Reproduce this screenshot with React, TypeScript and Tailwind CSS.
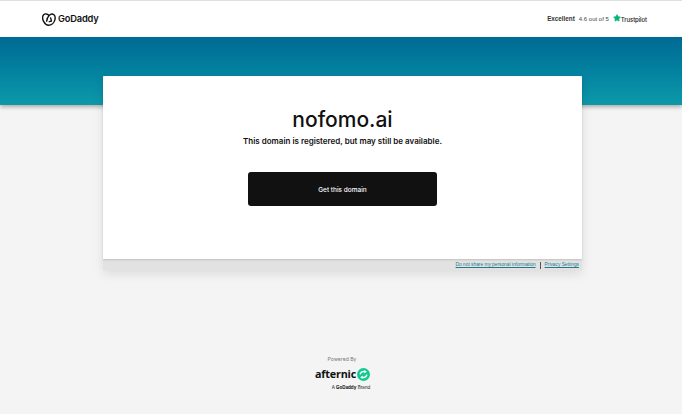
import { Star } from 'lucide-react';

function GoDaddyMark({ className }: { className: string }) {
  return (
    <svg viewBox="0 0 24 22" className={className} fill="none" stroke="#111111" strokeWidth="2.400" strokeLinecap="round" strokeLinejoin="round">
      <path d="M11.500 3.800C9.300 1 5 .6 2.800 3 .3 5.800 1 10.800 3 14.600c1.700 3.200 4.500 6.200 8.300 6.200 4.600 0 9.500-3.800 10.900-9.700.8-3.500.3-6.400-1.700-8.100-2.500-2.100-6.100-1.200-8.300 1.200-2.400 2.600-4 6.300-4.200 9.600" />
      <path d="M14.800 8.200l1.400 5.600-3.700.9" />
    </svg>
  );
}

function AfternicMark({ className }: { className: string }) {
  return (
    <svg viewBox="0 0 20 20" className={className}>
      <circle cx="10" cy="10" r="10" fill="#12c98f" />
      <path d="M3.800 9.800C4.300 6 8 3.500 11.500 4.500l-.9-1.900 4.600 3.100-4.400 2.800.7-1.800C8.900 6 6.500 7.500 6 10z" fill="#ffffff" />
      <path d="M16.200 10.200c-.5 3.800-4.200 6.300-7.700 5.300l.9 1.900-4.600-3.100 4.400-2.800-.7 1.800c2.600.7 5-.8 5.500-3.300z" fill="#ffffff" />
    </svg>
  );
}

export default function App() {
  return (
    <div className="min-h-[414px] bg-[#f4f4f4] font-['Inter',sans-serif] text-[#111111]">
      <header className="flex h-[37px] items-center justify-between border-t border-[#e0e0e0] bg-white pl-[42px] pr-[35px]">
        <div className="flex items-center gap-[2px]">
          <GoDaddyMark className="h-[13px] w-[14px]" />
          <span className="text-[9.300px] font-semibold tracking-[-0.2px]">GoDaddy</span>
        </div>
        <div className="flex items-center font-['Liberation_Sans',sans-serif]">
          <span className="text-[6.300px] font-bold text-[#333333]">Excellent</span>
          <span className="ml-[4px] text-[6px] text-[#444444]">4.6 out of 5</span>
          <Star className="ml-[4px] mb-[2px] h-[8px] w-[8px] fill-[#00b67a] text-[#00b67a]" />
          <span className="font-['Inter',sans-serif] text-[6px] font-medium tracking-[-0.1px] text-[#191919]">Trustpilot</span>
        </div>
      </header>

      <div className="h-[68px] bg-gradient-to-b from-[#006a94] to-[#0d99aa] shadow-[0_2px_4px_rgba(0,0,0,0.3)]" />

      <main className="relative -mt-[29px] ml-[103px] w-[479px] bg-[#e2e2e2] shadow-[0_4px_10px_rgba(0,0,0,0.1)]">
        <section className="flex h-[183px] flex-col items-center rounded-t-[3px] bg-white pt-[30px] shadow-[0_1px_2px_rgba(0,0,0,0.15)]">
          <h1 className="text-[21px] font-medium leading-[28px]">nofomo.ai</h1>
          <p className="mt-[1px] text-[8px] font-semibold leading-[12px]">This domain is registered, but may still be available.</p>
          <button className="mt-[25px] h-[34px] w-[189px] rounded-[3px] bg-[#111111] pt-[3px] text-[6.500px] font-medium text-white">Get this domain</button>
        </section>
        <div className="flex h-[11px] items-center justify-end pr-[3px] pt-[1px] font-['Liberation_Sans',sans-serif] text-[4.800px] text-[#1b7a8c]">
          <a className="underline">Do not share my personal information</a>
          <span className="mx-[4px] h-[7px] w-px bg-[#555555]" />
          <a className="underline">Privacy Settings</a>
        </div>
      </main>

      <footer className="mt-[85px] flex flex-col items-center">
        <span className="ml-[2px] text-[5.100px] leading-[8px] text-[#767676]">Powered By</span>
        <div className="ml-[3px] mt-[4px] flex items-center gap-[1px]">
          <span className="font-['Open_Sans',sans-serif] text-[10.800px] font-bold leading-[14px] tracking-[-0.2px]">afternic</span>
          <AfternicMark className="h-[13px] w-[13px]" />
        </div>
        <div className="ml-[20px] mt-[4px] text-[4.500px] leading-[6px]">
          A <span className="font-bold">GoDaddy</span> Brand
        </div>
      </footer>
    </div>
  );
}
